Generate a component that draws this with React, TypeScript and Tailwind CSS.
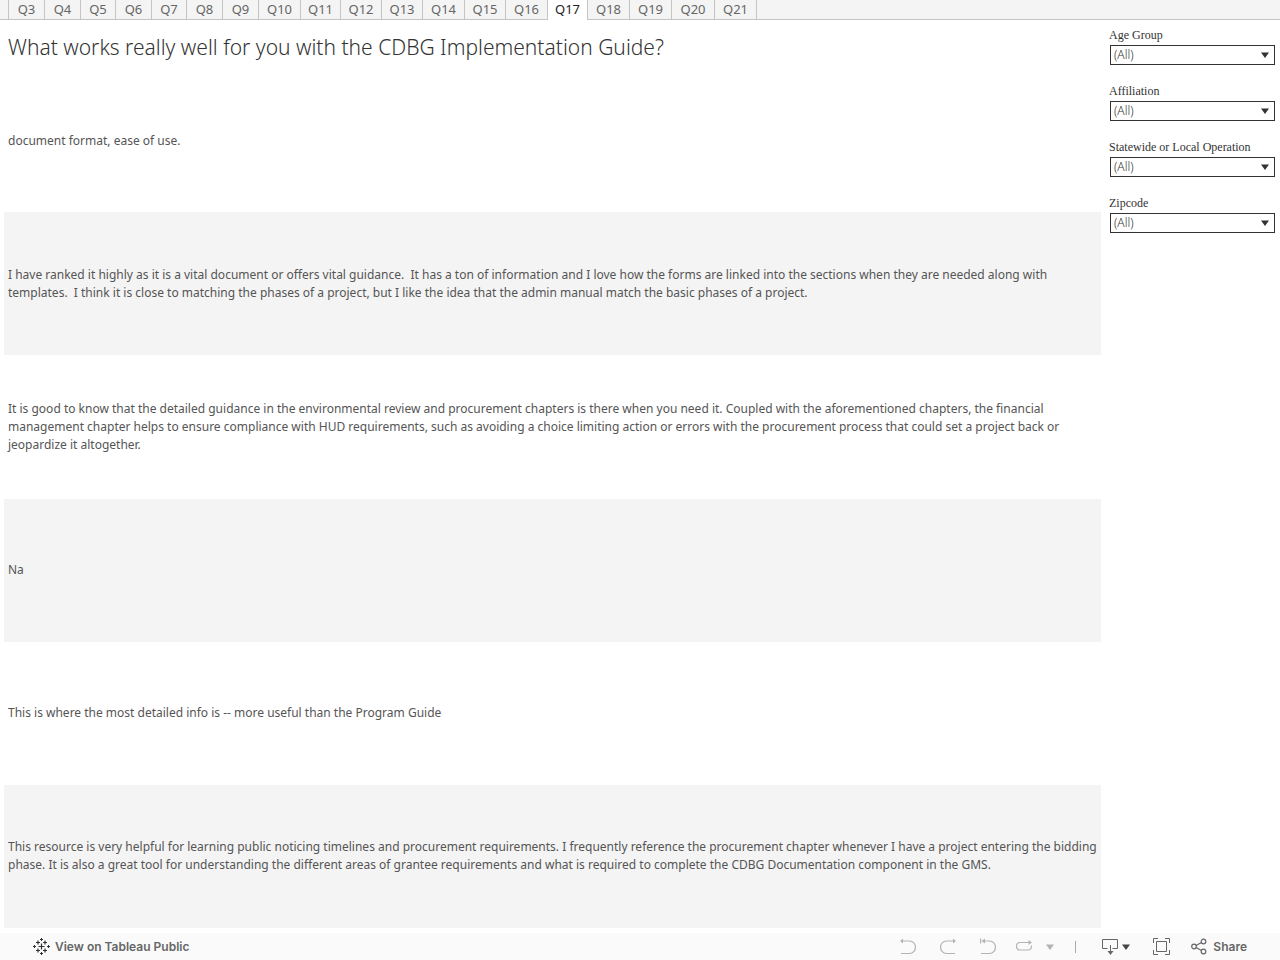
import { useState } from "react";

const tabs = [
  { name: "Q3", width: "w-9" },
  { name: "Q4", width: "w-9" },
  { name: "Q5", width: "w-[35px]" },
  { name: "Q6", width: "w-9" },
  { name: "Q7", width: "w-[35px]" },
  { name: "Q8", width: "w-9" },
  { name: "Q9", width: "w-9" },
  { name: "Q10", width: "w-[42px]" },
  { name: "Q11", width: "w-10" },
  { name: "Q12", width: "w-[41px]" },
  { name: "Q13", width: "w-[41px]" },
  { name: "Q14", width: "w-[42px]" },
  { name: "Q15", width: "w-[41px]" },
  { name: "Q16", width: "w-[42px]" },
  { name: "Q17", width: "w-10" },
  { name: "Q18", width: "w-[42px]" },
  { name: "Q19", width: "w-[42px]" },
  { name: "Q20", width: "w-[43px]" },
  { name: "Q21", width: "w-[42px]" },
];

const answers = [
  "document format, ease of use.",
  "I have ranked it highly as it is a vital document or offers vital guidance.  It has a ton of information and I love how the forms are linked into the sections when they are needed along with\ntemplates.  I think it is close to matching the phases of a project, but I like the idea that the admin manual match the basic phases of a project.",
  "It is good to know that the detailed guidance in the environmental review and procurement chapters is there when you need it. Coupled with the aforementioned chapters, the financial\nmanagement chapter helps to ensure compliance with HUD requirements, such as avoiding a choice limiting action or errors with the procurement process that could set a project back or\njeopardize it altogether.",
  "Na",
  "This is where the most detailed info is -- more useful than the Program Guide",
  "This resource is very helpful for learning public noticing timelines and procurement requirements. I frequently reference the procurement chapter whenever I have a project entering the bidding\nphase. It is also a great tool for understanding the different areas of grantee requirements and what is required to complete the CDBG Documentation component in the GMS.",
];

const filters = [
  { id: "age-group", label: "Age Group" },
  { id: "affiliation", label: "Affiliation" },
  { id: "operation", label: "Statewide or Local Operation" },
  { id: "zipcode", label: "Zipcode" },
];

const Caret = ({ className }: { className: string }) => (
  <svg className={className} viewBox="0 0 8 6" fill="currentColor" aria-hidden="true">
    <path d="M0 0.5h8L4 6z" />
  </svg>
);

const SheetTabs = () => {
  const [active, setActive] = useState("Q17");

  return (
    <nav className="flex h-5 shrink-0 bg-[#f4f4f4] text-[13px] leading-[18px] text-[#666]">
      <div className="w-2 border-b border-[#c4c4c4]" />
      <div className="flex border-l border-[#c4c4c4]">
        {tabs.map((tab) => (
          <button
            key={tab.name}
            type="button"
            onClick={() => setActive(tab.name)}
            className={`${tab.width} flex justify-center border-r border-[#c4c4c4] ${
              tab.name === active ? "bg-white text-[#222]" : "border-b"
            }`}
          >
            {tab.name}
          </button>
        ))}
      </div>
      <div className="flex-1 border-b border-[#c4c4c4]" />
    </nav>
  );
};

const Filter = ({ id, label }: { id: string; label: string }) => (
  <div className="mb-4 flex flex-col">
    <label htmlFor={id} className="h-5 font-['Liberation_Serif',serif] text-xs leading-5 text-[#333]">
      {label}
    </label>
    <div className="relative ml-px">
      <select
        id={id}
        className="block h-5 w-full appearance-none border border-[#333] bg-white px-[3px] text-xs leading-[18px] font-light text-[#333]"
      >
        <option>(All)</option>
      </select>
      <Caret className="pointer-events-none absolute top-[7px] right-1.5 h-1.5 w-2 text-[#333]" />
    </div>
  </div>
);

const TableauLogo = () => (
  <svg className="size-[17px] text-[#333]" viewBox="0 0 17 17" fill="none" stroke="currentColor" aria-hidden="true">
    <path strokeWidth="1.2" d="M8.5 5.5v6M5.5 8.5h6M5 2.5v4M3 4.5h4M12 2.5v4M10 4.5h4M5 10.5v4M3 12.5h4M12 10.5v4M10 12.5h4" />
    <path d="M8.5 0v3M7 1.5h3M8.5 14v3M7 15.5h3M1.5 7v3M0 8.5h3M15.5 7v3M14 8.5h3" />
  </svg>
);

const Toolbar = () => (
  <footer className="flex h-[27px] shrink-0 items-center justify-between bg-[#fafafa] px-[33px] text-[#666]">
    <a href="#public" className="flex items-center gap-[5px] font-[Inter,sans-serif] text-xs font-semibold">
      <TableauLogo />
      View on Tableau Public
    </a>

    <div className="flex items-center">
      <div className="flex items-center text-[#b4b4b4]">
        <button type="button" aria-label="Undo" className="mr-6">
          <svg className="h-[17px] w-4" viewBox="0 0 16 17" fill="none" stroke="currentColor" strokeWidth="1.2">
            <path d="M2 3h7.500a6 6.250 0 0 1 0 12.500H1" />
            <path fill="currentColor" stroke="none" d="M0 3L3 0.500v5z" />
          </svg>
        </button>
        <button type="button" aria-label="Redo" className="mr-6">
          <svg className="h-[17px] w-4" viewBox="0 0 16 17" fill="none" stroke="currentColor" strokeWidth="1.2">
            <path d="M14 3H6.500a6 6.250 0 0 0 0 12.500H15" />
            <path fill="currentColor" stroke="none" d="M16 3L13 0.500v5z" />
          </svg>
        </button>
        <button type="button" aria-label="Revert" className="mr-5">
          <svg className="h-[17px] w-4" viewBox="0 0 16 17" fill="none" stroke="currentColor" strokeWidth="1.2">
            <path d="M0.600 0.500v5M3 3h6.500a6 6.250 0 0 1 0 12.500H1" />
            <path fill="currentColor" stroke="none" d="M1.500 3L5 0.500v5z" />
          </svg>
        </button>
        <button type="button" aria-label="Refresh" className="mr-3.5">
          <svg className="h-[17px] w-4" viewBox="0 0 16 17" fill="none" stroke="currentColor" strokeWidth="1.2">
            <path d="M13 4.500H4a3.500 3.500 0 0 0-3.500 4a3.500 3.500 0 0 0 3.500 3.500h8a3.500 3.500 0 0 0 3.300-4.500" />
            <path fill="currentColor" stroke="none" d="M16 4.500L12.500 2v5z" />
          </svg>
        </button>
        <button type="button" aria-label="Refresh options" className="mr-[21px]">
          <Caret className="h-1.5 w-2" />
        </button>
        <div className="mr-[26px] h-3 w-px bg-[#aaa]" />
      </div>
      <button type="button" aria-label="Download" className="mr-[23px] flex items-center gap-1">
        <svg className="h-[17px] w-4" viewBox="0 0 16 17" fill="none" stroke="currentColor">
          <path d="M5.5 10.5h-5v-9h15v9h-5M8.5 7v8" />
          <path fill="currentColor" stroke="none" d="M5.500 13h6l-3 4z" />
        </svg>
        <Caret className="h-1.5 w-2 text-[#444]" />
      </button>
      <button type="button" aria-label="Full screen" className="mr-[21px]">
        <svg className="size-[17px]" viewBox="0 0 17 17" fill="none" stroke="currentColor">
          <path d="M3.5 3.5h10v10h-10zM0.5 5V0.5H5M12 0.5h4.5V5M16.5 12v4.5H12M5 16.5H0.5V12" />
        </svg>
      </button>
      <button type="button" className="flex items-center gap-1.5 font-[Inter,sans-serif] text-xs font-semibold">
        <svg className="h-[17px] w-4" viewBox="0 0 16 17" fill="none" stroke="currentColor" strokeWidth="1.2" aria-hidden="true">
          <circle cx="3" cy="8.5" r="2.3" />
          <circle cx="12.5" cy="3.5" r="2.3" />
          <circle cx="12.5" cy="13.5" r="2.3" />
          <path d="M5 7.5l5.5-3M5 9.5l5.500 3" />
        </svg>
        Share
      </button>
    </div>
  </footer>
);

const App = () => {
  return (
    <div className="flex min-h-screen flex-col bg-white font-['Noto_Sans','Open_Sans',sans-serif]">
      <SheetTabs />
      <div className="flex flex-1 pt-[5px] pb-[5px]">
        <main className="ml-1 flex min-w-0 flex-1 flex-col">
          <h1 className="h-11 shrink-0 px-1 text-[21px] leading-[44px] font-light text-[#333]">
            What works really well for you with the CDBG Implementation Guide?
          </h1>
          <ul className="flex flex-1 flex-col">
            {answers.map((answer) => (
              <li
                key={answer}
                className="flex flex-1 basis-0 items-center px-1 text-xs leading-[18px] whitespace-pre-wrap text-[#555] even:bg-[#f4f4f4]"
              >
                {answer}
              </li>
            ))}
          </ul>
        </main>
        <aside className="ml-2 w-[171px] shrink-0 pr-[5px]">
          {filters.map((filter) => (
            <Filter key={filter.id} id={filter.id} label={filter.label} />
          ))}
        </aside>
      </div>
      <Toolbar />
    </div>
  );
};

export default App;
